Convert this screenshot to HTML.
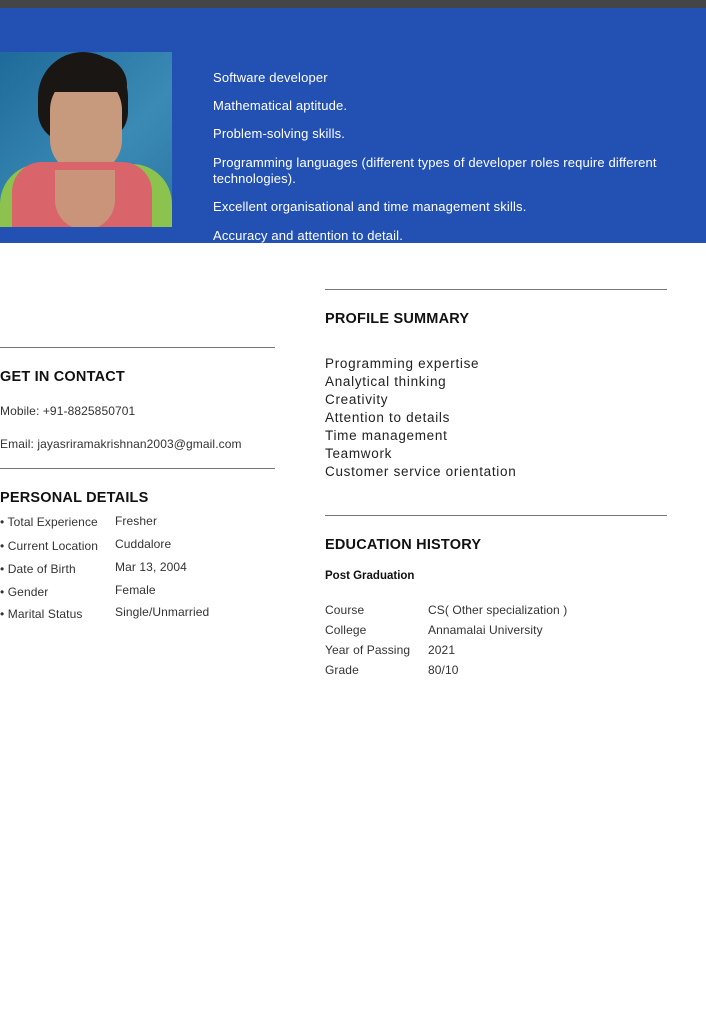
<!DOCTYPE html>
<html><head><meta charset="utf-8"><style>
*{margin:0;padding:0;box-sizing:border-box}
body{width:706px;height:1010px;background:#fff;position:relative;overflow:hidden;font-family:"Liberation Sans",sans-serif;color:#111}
.a{position:absolute;white-space:nowrap}
.top{left:0;top:0;width:706px;height:8px;background:#454545}
.blue{left:0;top:8px;width:706px;height:235px;background:#2351b3}
.w{color:#fff;font-size:13px;left:213px;letter-spacing:.15px;font-weight:500}
.hr{position:absolute;height:1px;background:#777}
.h{font-weight:bold;font-size:14.5px;color:#111;letter-spacing:.2px}
.p{font-size:13.5px;color:#222;letter-spacing:.7px}
.t{font-size:12px;color:#333;letter-spacing:.1px}
</style></head><body>
<div class="a top"></div>
<div class="a blue"></div>
<div class="a" style="left:0;top:52px;width:172px;height:175px;overflow:hidden;background:linear-gradient(135deg,#1e6a9a,#3b8ab5 60%,#2b76a5)">
 <div class="a" style="left:38px;top:0;width:90px;height:90px;border-radius:45px 45px 30px 30px;background:#1a1614"></div>
 <div class="a" style="left:50px;top:22px;width:72px;height:100px;border-radius:36px 36px 34px 34px;background:#c79a7e"></div>
 <div class="a" style="left:45px;top:5px;width:82px;height:35px;border-radius:40px 40px 10px 10px;background:#1a1614"></div>
 <div class="a" style="left:0;top:112px;width:172px;height:70px;background:#8cc24e;border-radius:40px 40px 0 0"></div>
 <div class="a" style="left:12px;top:110px;width:140px;height:70px;background:#d9646a;border-radius:30px 30px 0 0"></div>
 <div class="a" style="left:55px;top:118px;width:60px;height:60px;background:#c99479;border-radius:0 0 30px 30px"></div>
</div>
<div class="a w" style="top:70px">Software developer</div>
<div class="a w" style="top:98px">Mathematical aptitude.</div>
<div class="a w" style="top:126px">Problem-solving skills.</div>
<div class="a w" style="top:155px">Programming languages (different types of developer roles require different</div>
<div class="a w" style="top:171px">technologies).</div>
<div class="a w" style="top:199px">Excellent organisational and time management skills.</div>
<div class="a w" style="top:228px">Accuracy and attention to detail.</div>

<div class="hr" style="left:325px;top:289px;width:342px"></div>
<div class="a h" style="left:325px;top:311px">PROFILE SUMMARY</div>
<div class="a p" style="left:325px;top:356px">Programming expertise</div>
<div class="a p" style="left:325px;top:374px">Analytical thinking</div>
<div class="a p" style="left:325px;top:392px">Creativity</div>
<div class="a p" style="left:325px;top:410px">Attention to details</div>
<div class="a p" style="left:325px;top:428px">Time management</div>
<div class="a p" style="left:325px;top:446px">Teamwork</div>
<div class="a p" style="left:325px;top:464px">Customer service orientation</div>
<div class="hr" style="left:325px;top:515px;width:342px"></div>
<div class="a h" style="left:325px;top:537px">EDUCATION HISTORY</div>
<div class="a" style="left:325px;top:570px;font-size:11.5px;font-weight:bold">Post Graduation</div>
<div class="a t" style="left:325px;top:603px">Course</div><div class="a t" style="left:428px;top:603px">CS( Other specialization )</div>
<div class="a t" style="left:325px;top:623px">College</div><div class="a t" style="left:428px;top:623px">Annamalai University</div>
<div class="a t" style="left:325px;top:643px">Year of Passing</div><div class="a t" style="left:428px;top:643px">2021</div>
<div class="a t" style="left:325px;top:663px">Grade</div><div class="a t" style="left:428px;top:663px">80/10</div>

<div class="hr" style="left:0;top:347px;width:275px"></div>
<div class="a h" style="left:0;top:369px">GET IN CONTACT</div>
<div class="a t" style="left:0;top:404px">Mobile: +91-8825850701</div>
<div class="a t" style="left:0;top:437px">Email: jayasriramakrishnan2003@gmail.com</div>
<div class="hr" style="left:0;top:468px;width:275px"></div>
<div class="a h" style="left:0;top:490px">PERSONAL DETAILS</div>
<div class="a t" style="left:0;top:515px">• Total Experience</div><div class="a t" style="left:115px;top:514px">Fresher</div>
<div class="a t" style="left:0;top:539px">• Current Location</div><div class="a t" style="left:115px;top:537px">Cuddalore</div>
<div class="a t" style="left:0;top:562px">• Date of Birth</div><div class="a t" style="left:115px;top:560px">Mar 13, 2004</div>
<div class="a t" style="left:0;top:585px">• Gender</div><div class="a t" style="left:115px;top:583px">Female</div>
<div class="a t" style="left:0;top:607px">• Marital Status</div><div class="a t" style="left:115px;top:605px">Single/Unmarried</div>
</body></html>
